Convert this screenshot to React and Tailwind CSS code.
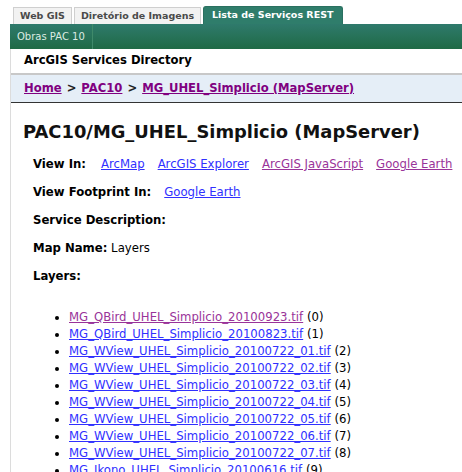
import React from "react";

const layers = [
  ["MG_QBird_UHEL_Simplicio_20100923.tif", 0, true],
  ["MG_QBird_UHEL_Simplicio_20100823.tif", 1],
  ["MG_WView_UHEL_Simplicio_20100722_01.tif", 2],
  ["MG_WView_UHEL_Simplicio_20100722_02.tif", 3],
  ["MG_WView_UHEL_Simplicio_20100722_03.tif", 4],
  ["MG_WView_UHEL_Simplicio_20100722_04.tif", 5],
  ["MG_WView_UHEL_Simplicio_20100722_05.tif", 6],
  ["MG_WView_UHEL_Simplicio_20100722_06.tif", 7],
  ["MG_WView_UHEL_Simplicio_20100722_07.tif", 8],
  ["MG_Ikono_UHEL_Simplicio_20100616.tif", 9],
];

const Tab = ({ label, active }) =>
  active ? (
    <div className="h-[18px] px-[8px] flex items-center rounded-t-[3px] bg-[#2f7d6b] text-white text-[9.5px] font-bold border border-b-0 border-[#2a7060] whitespace-nowrap">
      {label}
    </div>
  ) : (
    <div className="h-[17px] px-[6px] flex items-center bg-[#f2f2f2] text-[#4a4a4a] text-[9.5px] font-bold border border-b-0 border-[#cfcfcf] whitespace-nowrap">
      {label}
    </div>
  );

const Link = ({ children, visited }) => (
  <a
    href="#"
    className={`underline whitespace-nowrap ${visited ? "text-[#993399]" : "text-[#3030ff]"}`}
  >
    {children}
  </a>
);

export default function App() {
  return (
    <div className="w-[462px] h-[472px] overflow-hidden bg-white font-['DejaVu_Sans',Verdana,sans-serif] text-black">
      {/* tab strip */}
      <div className="flex items-end gap-[2px] pl-[13px] h-[24px]">
        <Tab label="Web GIS" />
        <Tab label="Diretório de Imagens" />
        <Tab label="Lista de Serviços REST" active />
      </div>

      {/* sub menu bar */}
      <div className="ml-[10px] h-[25px] flex items-center bg-gradient-to-b from-[#2f7a6c] to-[#1f6a45]">
        <span className="px-[7px] text-[10px] text-[#dcebe3] border-r border-[#3f8a6a] h-full flex items-center">
          Obras PAC 10
        </span>
      </div>

      <div className="ml-[10px] border-l border-[#dcdcdc] min-h-[500px]">
        <div className="pl-[13px] pt-[3px] h-[24px] text-[11.6px] font-bold leading-[16px]">
          ArcGIS Services Directory
        </div>

        <div className="h-[30px] bg-[#e5eef7] border-t-2 border-t-[#c8c8c8] border-b border-b-[#333] flex items-center pl-[13px] text-[11.6px] font-bold text-[#222] whitespace-nowrap">
          <a href="#" className="underline text-[#800080]">Home</a>
          <span className="mx-[5px]">&gt;</span>
          <a href="#" className="underline text-[#800080]">PAC10</a>
          <span className="mx-[5px]">&gt;</span>
          <a href="#" className="underline text-[#800080]">
            MG_UHEL_Simplicio (MapServer)
          </a>
        </div>

        <h2 className="pl-[12px] mt-[17px] text-[17.9px] font-bold leading-[24px] text-[#111] whitespace-nowrap">
          PAC10/MG_UHEL_Simplicio (MapServer)
        </h2>

        <div className="pl-[22px] text-[11.7px] leading-[16px] whitespace-nowrap">
          <div className="mt-[12px] flex gap-[13px]">
            <b className="mr-[2px]">View In:</b>
            <Link>ArcMap</Link>
            <Link>ArcGIS Explorer</Link>
            <Link visited>ArcGIS JavaScript</Link>
            <Link visited>Google Earth</Link>
          </div>
          <div className="mt-[12px] flex gap-[13px]">
            <b>View Footprint In:</b>
            <Link>Google Earth</Link>
          </div>
          <div className="mt-[12px] font-bold">Service Description:</div>
          <div className="mt-[12px]">
            <b>Map Name:</b> Layers
          </div>
          <div className="mt-[12px] font-bold">Layers:</div>

          <ul className="mt-[25px] pl-[36px] list-disc leading-[17px]">
            {layers.map(([name, id, visited]) => (
              <li key={id}>
                <Link visited={visited}>{name}</Link> ({id})
              </li>
            ))}
          </ul>
        </div>
      </div>
    </div>
  );
}
